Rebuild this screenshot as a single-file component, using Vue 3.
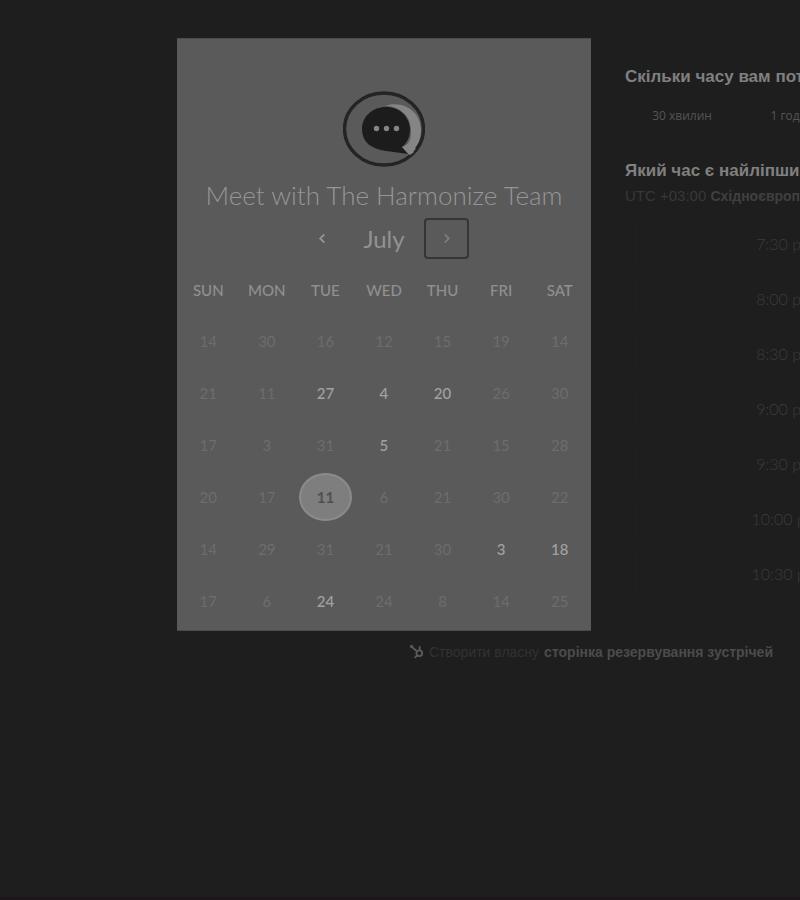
<script setup>
import { ref } from 'vue'

const weekdays = ['SUN', 'MON', 'TUE', 'WED', 'THU', 'FRI', 'SAT']
const weeks = [
  [14, 30, 16, 12, 15, 19, 14],
  [21, 11, 27, 4, 20, 26, 30],
  [17, 3, 31, 5, 21, 15, 28],
  [20, 17, 11, 6, 21, 30, 22],
  [14, 29, 31, 21, 30, 3, 18],
  [17, 6, 24, 24, 8, 14, 25],
]
const open = new Set(['1-2', '1-3', '1-4', '2-3', '3-2', '4-5', '4-6', '5-2'])
const selected = ref('3-2')
const durations = ['30 хвилин', '1 година']
const times = ['7:30 pm', '8:00 pm', '8:30 pm', '9:00 pm', '9:30 pm', '10:00 pm', '10:30 pm']
</script>

<template>
  <div class="page">
    <main class="booking">
      <section class="card">
        <svg class="logo" viewBox="0 0 82 76" aria-hidden="true">
          <ellipse cx="41" cy="38" rx="39.5" ry="36" fill="none" stroke="#242424" stroke-width="3.4" />
          <path d="M43 14.500C61 9 78 21 78 39C78 49 74 55 70 59L71 61L67 64L61 56C68 51 68 46 68 38C67 25 58 16 43 14.500Z" fill="#858585" />
          <path d="M19 38C19 25 30 16 43 16C57 16 67 26 67 39C67 46 64 52 59 56L65 63C58 62 51 61 43 60C28 58 19 51 19 38Z" fill="#1c1c1c" />
          <path d="M59 56L66 63.500L73 58L66 53Z" fill="#858585" />
          <g fill="#858585">
            <circle cx="33.500" cy="37.500" r="2.700" />
            <circle cx="43.500" cy="37.500" r="2.700" />
            <circle cx="53.500" cy="37.500" r="2.700" />
          </g>
        </svg>
        <h1>Meet with The Harmonize Team</h1>
        <div class="month">
          <button type="button" class="nav" aria-label="Previous month">
            <svg viewBox="0 0 8 12"><path d="M6.500 1.500L2 6L6.500 10.500" /></svg>
          </button>
          <h2>July</h2>
          <button type="button" class="nav next" aria-label="Next month">
            <svg viewBox="0 0 8 12"><path d="M1.500 1.500L6 6L1.500 10.500" /></svg>
          </button>
        </div>
        <table>
          <thead>
            <tr><th v-for="d in weekdays" :key="d" scope="col">{{ d }}</th></tr>
          </thead>
          <tbody>
            <tr v-for="(week, r) in weeks" :key="r">
              <td v-for="(day, c) in week" :key="c">
                <button
                  type="button"
                  class="day"
                  :class="{ open: open.has(r + '-' + c), selected: selected === r + '-' + c }"
                  :disabled="!open.has(r + '-' + c)"
                  @click="selected = r + '-' + c"
                >{{ day }}</button>
              </td>
            </tr>
          </tbody>
        </table>
      </section>

      <section class="details">
        <h3>Скільки часу вам потрібно?</h3>
        <div class="durations">
          <button v-for="d in durations" :key="d" type="button">{{ d }}</button>
        </div>
        <h3>Який час є найліпшим?</h3>
        <p class="zone"><span>UTC +03:00</span> <b>Східноєвропейський час</b></p>
        <div class="times">
          <button v-for="t in times" :key="t" type="button">{{ t }}</button>
        </div>
      </section>

      <footer>
        <svg class="sprocket" viewBox="0 0 12 12" aria-hidden="true">
          <circle cx="8" cy="7" r="2.500" />
          <path d="M8.300 4.500V1M6 5.500L1.500 1.500M6.200 8.800L4 11" />
          <circle cx="1.300" cy="1.300" r=".6" />
        </svg>
        <span>Створити власну</span>
        <a href="#">сторінка резервування зустрічей</a>
      </footer>
    </main>
  </div>
</template>

<style>
body {
  margin: 0;
  background: #1e1e1e;
}
</style>

<style scoped>
.page {
  box-sizing: border-box;
  min-height: 100vh;
  padding: 38px 0 0 177px;
  overflow: hidden;
  border-bottom: 3px solid #1c161a;
  background: #1e1e1e;
  color: #8c8c8c;
  font-family: Lato, "Liberation Sans", sans-serif;
}
.booking {
  display: grid;
  grid-template-columns: minmax(414px, 1fr) minmax(415px, 1fr);
}
h1, h2, h3, p {
  margin: 0;
  font-weight: 400;
}
button {
  padding: 0;
  border: 0;
  background: none;
  color: inherit;
  font: inherit;
}
.card {
  display: flex;
  flex-direction: column;
  align-items: center;
  box-sizing: border-box;
  padding: 52px 2px 3px;
  border: 1px solid #4c4c4c;
  border-width: 1px 0;
  background: #5a5a5a;
}
.logo {
  width: 82px;
  height: 76px;
}
h1 {
  margin-top: 12px;
  font-size: 26px;
  font-weight: 300;
  line-height: 32px;
  white-space: nowrap;
  color: #969696;
}
.month {
  display: flex;
  align-items: center;
  justify-content: center;
  gap: 18px;
  margin-top: 7px;
}
h2 {
  min-width: 44px;
  text-align: center;
  font-size: 24px;
  line-height: 28px;
  color: #929292;
}
.nav {
  display: grid;
  place-items: center;
  box-sizing: border-box;
  width: 45px;
  height: 41px;
  border: 2px solid transparent;
  border-radius: 4px;
}
.nav svg {
  width: 8px;
  height: 11px;
  fill: none;
  stroke: #949494;
  stroke-width: 2;
}
.next {
  border-color: #353535;
}
.next svg {
  stroke: #7c7c7c;
}
table {
  width: 100%;
  margin-top: 12px;
  border-collapse: collapse;
  table-layout: fixed;
}
th {
  height: 38px;
  padding: 0 0 6px;
  font-size: 15px;
  font-weight: 500;
  color: #909090;
}
td {
  height: 52px;
  padding: 0;
  text-align: center;
}
.day {
  box-sizing: border-box;
  width: 53px;
  height: 48px;
  border-radius: 50%;
  font-size: 15px;
  color: #6d6d6d;
}
.open {
  font-weight: 500;
  color: #a2a2a2;
}
.selected {
  border: 2px solid #8b8b8b;
  background: #7e7e7e;
  font-weight: 700;
  color: #505050;
}
.details {
  padding: 28px 34px 0;
  font-family: "Liberation Sans", sans-serif;
}
h3 {
  font-size: 17px;
  font-weight: 700;
  line-height: 22px;
  white-space: nowrap;
  color: #808080;
}
.durations {
  display: grid;
  grid-template-columns: repeat(3, 114px);
  margin: 11px 0 29px;
  justify-content: start;
}
.durations button {
  height: 32px;
  font: 12px "Open Sans", sans-serif;
  color: #555555;
}
.zone {
  font-size: 15px;
  line-height: 28px;
  white-space: nowrap;
  color: #383838;
}
.zone b {
  font-size: 14px;
  font-weight: 700;
  color: #404040;
}
.times {
  display: grid;
  gap: 11px;
  margin: 11px 38px 0 11px;
}
.times button {
  height: 44px;
  border: 1px solid #202020;
  font: 300 16px Lato, sans-serif;
  color: #3c3c3c;
}
footer {
  display: flex;
  grid-column: 1 / -1;
  align-items: center;
  justify-content: center;
  gap: 5px;
  padding-top: 11px;
  font: 14px/20px "Liberation Sans", sans-serif;
  color: #323232;
}
footer a {
  font-weight: 700;
  color: #4c4c4c;
  text-decoration: none;
}
.sprocket {
  width: 14px;
  height: 14px;
  fill: none;
  stroke: #5c5c5c;
  stroke-width: 1.5;
}
</style>
